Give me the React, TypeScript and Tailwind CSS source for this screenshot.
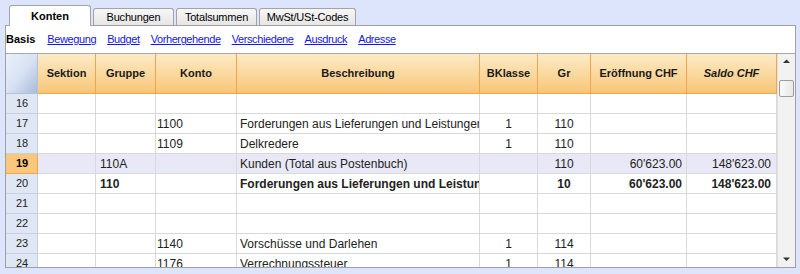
import React from 'react';

type Row = {
  n: number;
  sektion?: string;
  gruppe?: string;
  konto?: string;
  text?: string;
  bk?: string;
  gr?: string;
  eroeff?: string;
  saldo?: string;
  bold?: boolean;
  active?: boolean;
};

const rows: Row[] = [
  { n: 16 },
  { n: 17, konto: '1100', text: 'Forderungen aus Lieferungen und Leistungen', bk: '1', gr: '110' },
  { n: 18, konto: '1109', text: 'Delkredere', bk: '1', gr: '110' },
  { n: 19, gruppe: '110A', text: 'Kunden (Total aus Postenbuch)', gr: '110', eroeff: "60'623.00", saldo: "148'623.00", active: true },
  { n: 20, gruppe: '110', text: 'Forderungen aus Lieferungen und Leistungen', gr: '10', eroeff: "60'623.00", saldo: "148'623.00", bold: true },
  { n: 21 },
  { n: 22 },
  { n: 23, konto: '1140', text: 'Vorschüsse und Darlehen', bk: '1', gr: '114' },
  { n: 24, konto: '1176', text: 'Verrechnungssteuer', bk: '1', gr: '114' },
];

const tabs = ['Konten', 'Buchungen', 'Totalsummen', 'MwSt/USt-Codes'];
const links = ['Bewegung', 'Budget', 'Vorhergehende', 'Verschiedene', 'Ausdruck', 'Adresse'];

const headCls =
  'flex items-center justify-center border-r border-b border-[#f2a54a] bg-gradient-to-b from-[#fdebc6] to-[#f7c676] text-[11px] font-bold text-[#1a1a1a]';

const cellCls = 'h-[20px] flex items-center border-r border-b border-[#d9d9d9] overflow-hidden whitespace-nowrap';

const App: React.FC = () => {
  return (
    <div className="w-[800px] h-[274px] overflow-hidden bg-[#dce5fb] font-['Liberation_Sans',Arial,sans-serif]">
      {/* tabs */}
      <div className="relative z-10 h-[25px] flex items-end pl-[9px] gap-[2px]">
        {tabs.map((t, i) =>
          i === 0 ? (
            <div
              key={t}
              className="h-[21px] w-[82px] -mb-px flex items-center justify-center bg-white border border-b-0 border-[#a3a3a3] rounded-t-[3px] text-[11px] font-bold text-black"
            >
              {t}
            </div>
          ) : (
            <div
              key={t}
              className={`h-[17px] ${i === 3 ? 'w-[97px]' : 'w-[81px]'} flex items-center justify-center bg-gradient-to-b from-[#f7f7f7] to-[#e6e6e6] border border-b-0 border-[#a3a3a3] rounded-t-[3px] text-[11px] tracking-[-0.2px] text-black`}
            >
              {t}
            </div>
          )
        )}
      </div>

      {/* panel */}
      <div className="ml-[5px] w-[791px] h-[243px] bg-white border border-[#a0a0a0] flex flex-col">
        <div className="h-[27px] shrink-0 flex items-center pl-[0px] text-[11px]">
          <span className="font-bold text-black mr-[12px]">Basis</span>
          {links.map((l) => (
            <span key={l} className="underline text-[#1515e8] tracking-[-0.4px] mr-[11px]">
              {l}
            </span>
          ))}
        </div>

        <div className="flex-1 flex border-t border-[#a8a8a8] overflow-hidden">
          <div className="w-[771px] grid grid-cols-[32px_58px_60px_81px_243px_58px_53px_96px_90px] content-start">
            <div className="h-[40px] border-r border-b border-[#b4c3dc] bg-gradient-to-br from-[#eaf0fb] via-[#d9e3f4] to-[#a9bbda]" />
            <div className={headCls}>Sektion</div>
            <div className={headCls}>Gruppe</div>
            <div className={headCls}>Konto</div>
            <div className={headCls}>Beschreibung</div>
            <div className={headCls}>BKlasse</div>
            <div className={headCls}>Gr</div>
            <div className={headCls}>Eröffnung CHF</div>
            <div className={`${headCls} italic`}>Saldo CHF</div>

            {rows.map((r) => {
              const bg = r.active ? 'bg-[#e8e8f6]' : 'bg-white';
              const fw = r.bold ? 'font-bold' : '';
              return (
                <React.Fragment key={r.n}>
                  <div
                    className={`h-[20px] flex items-center pl-[10px] border-r border-b text-[11px] ${
                      r.active
                        ? 'bg-[#fbc77c] border-[#f2a54a] font-bold text-black'
                        : 'bg-[#dfe7f5] border-[#c3d0e6] text-[#222]'
                    }`}
                  >
                    {r.n}
                  </div>
                  <div className={`${cellCls} ${bg} pl-[4px] text-[12px] text-[#222]`}>{r.sektion}</div>
                  <div className={`${cellCls} ${bg} ${fw} pl-[4px] text-[12px] text-[#222]`}>{r.gruppe}</div>
                  <div className={`${cellCls} ${bg} pl-[1px] text-[12px] text-[#222]`}>{r.konto}</div>
                  <div className={`${cellCls} ${bg} ${fw} pl-[3px] text-[12px] text-[#222]`}>{r.text}</div>
                  <div className={`${cellCls} ${bg} justify-center text-[12px] text-[#222]`}>{r.bk}</div>
                  <div className={`${cellCls} ${bg} ${fw} justify-center text-[12px] text-[#222]`}>{r.gr}</div>
                  <div className={`${cellCls} ${bg} ${fw} justify-end pr-[4px] text-[12px] text-[#222]`}>{r.eroeff}</div>
                  <div className={`${cellCls} ${bg} ${fw} justify-end pr-[5px] text-[12px] text-[#222]`}>{r.saldo}</div>
                </React.Fragment>
              );
            })}
          </div>

          {/* scrollbar */}
          <div className="w-[18px] flex flex-col items-center bg-[#f2f2f2] border-l border-[#e0e0e0]">
            <svg width="9" height="8" viewBox="0 0 9 8" className="mt-[3px]">
              <path d="M1 6 L4.5 2.5 L8 6 Z" fill="#333" />
            </svg>
            <div className="mt-[15px] w-[15px] h-[17px] rounded-[2px] border border-[#9c9c9c] bg-gradient-to-r from-[#fafafa] to-[#e8e8e8]" />
            <div className="flex-1" />
            <svg width="9" height="8" viewBox="0 0 9 8" className="mb-[4px]">
              <path d="M1 2.5 L4.5 6 L8 2.5 Z" fill="#333" />
            </svg>
          </div>
        </div>
      </div>
    </div>
  );
};

export default App;
